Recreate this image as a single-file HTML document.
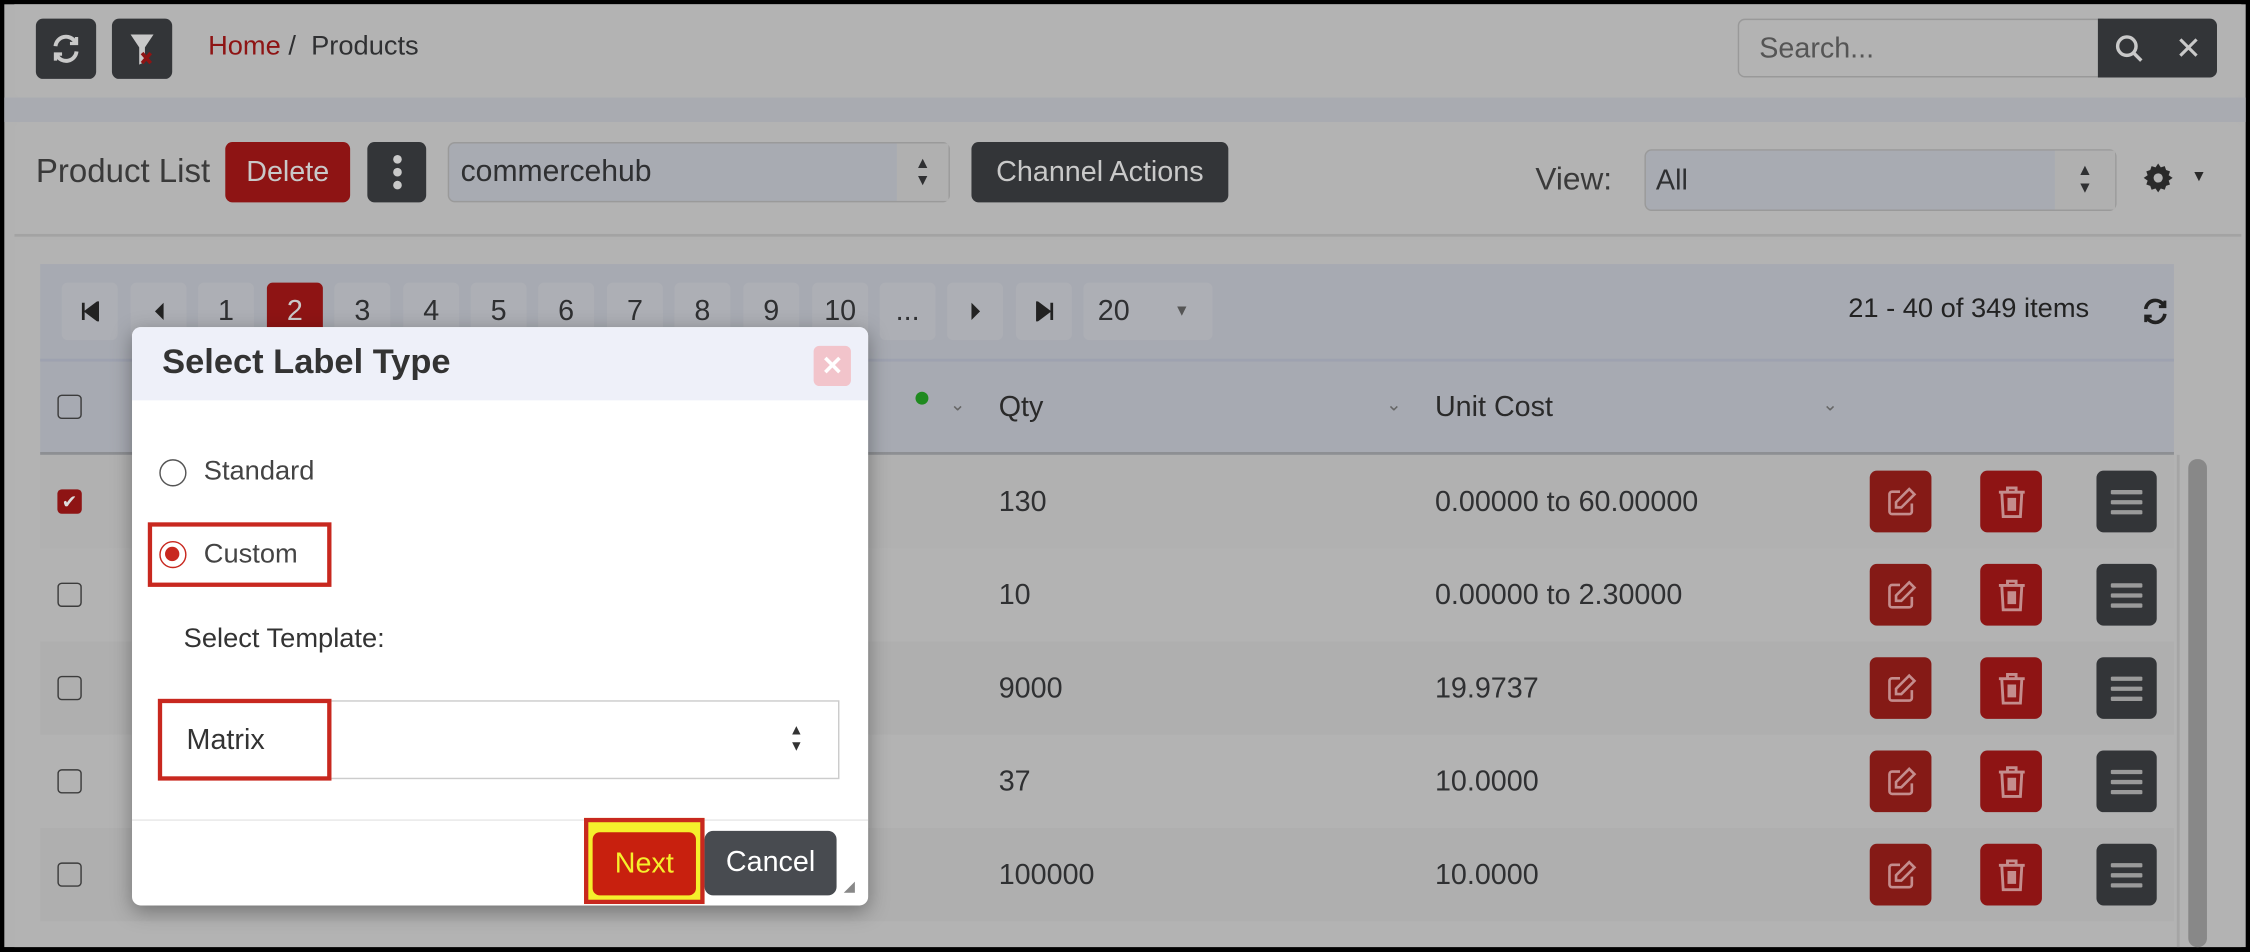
<!DOCTYPE html>
<html><head><meta charset="utf-8"><style>
*{box-sizing:border-box;margin:0;padding:0}
html,body{width:2250px;height:952px;overflow:hidden;background:#000}
#w{position:absolute;left:0;top:0;width:1568px;height:663px;transform:scale(1.43495);transform-origin:0 0;font-family:"Liberation Sans",sans-serif;color:#2f3032;background:#000}
.a{position:absolute}
.btn{position:absolute;border-radius:5px;display:flex;align-items:center;justify-content:center;color:#c9c9c9}
.dk{background:#333538}
.rd{background:#8e1414}
.pg{position:absolute;top:197px;width:39px;height:40px;background:#adafb5;border-radius:4px;font-size:20px;display:flex;align-items:center;justify-content:center;color:#2f3032}
.cb{position:absolute;left:40px;width:17px;height:17px;border:1.5px solid #3c3c3c;border-radius:3px}
.row{position:absolute;left:28px;width:1487px;height:65px}
.cell{position:absolute;font-size:20px}
</style></head><body><div id="w">
<div class="a" style="left:3px;top:3px;width:1562px;height:657px;background:#b2b2b2"></div>
<!-- top bar -->
<div class="a" style="left:10px;top:3px;width:1552px;height:65px;background:#b3b3b3;border-radius:0 0 5px 5px"></div>
<div class="a" style="left:3px;top:68px;width:1562px;height:17px;background:#a9abb1"></div>
<div class="btn dk" style="left:25px;top:13px;width:42px;height:42px"><svg width="22" height="22" viewBox="0 0 24 24" fill="none" stroke="#c9c9c9" stroke-width="3"><path d="M4 10a8 8 0 0 1 15-3M20 14a8 8 0 0 1-15 3"/><path d="M20 3v5h-5M4 21v-5h5" stroke-width="2.5"/></svg></div>
<div class="btn dk" style="left:78px;top:13px;width:42px;height:42px"><svg width="22" height="28" viewBox="0 0 22 28"><path d="M3 4h16l-6 9v10l-4 2V13z" fill="#c9c9c9"/><path d="M11 17l6 7M17 17l-6 7" stroke="#8e1414" stroke-width="2.5"/></svg></div>
<div class="a" style="left:145px;top:22px;font-size:19px"><span style="color:#8e1414">Home</span> /&nbsp; Products</div>
<div class="a" style="left:1211px;top:13px;width:255px;height:41px;border:1px solid #999;border-radius:5px 0 0 5px;background:#b3b3b3;font-size:20px;color:#555;padding:9px 14px">Search...</div>
<div class="btn dk" style="left:1462px;top:13px;width:83px;height:41px;border-radius:0 5px 5px 0;justify-content:space-around;font-size:22px"><svg width="22" height="22" viewBox="0 0 24 24" fill="none" stroke="#c9c9c9" stroke-width="2.6"><circle cx="10" cy="10" r="7"/><path d="M15 15l6 6"/></svg><span>✕</span></div>
<!-- second panel -->
<div class="a" style="left:10px;top:85px;width:1552px;height:80px;background:#b3b3b3;border-bottom:2px solid #a3a3a3;border-radius:5px 5px 0 0"></div>
<div class="a" style="left:25px;top:106px;font-size:23px;color:#3a3a3a">Product List</div>
<div class="btn rd" style="left:157px;top:99px;width:87px;height:42px;font-size:20px">Delete</div>
<div class="btn dk" style="left:256px;top:99px;width:41px;height:42px"><svg width="8" height="26"><circle cx="4" cy="4" r="3" fill="#c9c9c9"/><circle cx="4" cy="13" r="3" fill="#c9c9c9"/><circle cx="4" cy="22" r="3" fill="#c9c9c9"/></svg></div>
<div class="a" style="left:312px;top:99px;width:350px;height:42px;background:#a8abb2;border:1px solid #9a9a9a;border-radius:5px;font-size:21px;padding:8px 8px">commercehub<div class="a" style="right:0;top:0;width:36px;height:40px;background:#b0b0b0;font-size:11px;text-align:center;line-height:12px;padding-top:8px">▲<br>▼</div></div>
<div class="btn dk" style="left:677px;top:99px;width:179px;height:42px;font-size:20px">Channel Actions</div>
<div class="a" style="left:1070px;top:112px;font-size:22px;color:#3a3a3a">View:</div>
<div class="a" style="left:1146px;top:104px;width:329px;height:43px;background:#a8abb2;border:1px solid #9a9a9a;border-radius:5px;font-size:20px;padding:10px 7px">All<div class="a" style="right:0;top:0;width:42px;height:41px;background:#b0b0b0;font-size:11px;text-align:center;line-height:12px;padding-top:8px">▲<br>▼</div></div>
<div class="a" style="left:1493px;top:113px"><svg width="22" height="22" viewBox="0 0 24 24"><path d="M12 1l2 3 3-1 1 3 3 1-1 3 3 2-3 2 1 3-3 1-1 3-3-1-2 3-2-3-3 1-1-3-3-1 1-3-3-2 3-2-1-3 3-1 1-3 3 1z" fill="#2a2a2a"/><circle cx="12" cy="12" r="3.5" fill="#b3b3b3"/></svg></div>
<div class="a" style="left:1527px;top:117px;font-size:11px;color:#2a2a2a">▼</div>
<!-- table panel -->
<div class="a" style="left:10px;top:167px;width:1552px;height:493px;background:#b3b3b3"></div>
<div class="a" style="left:28px;top:184px;width:1487px;height:132px;background:#a7aab2"></div>
<div class="a" style="left:28px;top:250px;width:1487px;height:2px;background:#9ea2b0"></div>
<div class="a" style="left:28px;top:315px;width:1487px;height:2px;background:#8d8f93"></div>
<div class="pg" style="left:43px"><svg width="12" height="14"><path d="M1 1v12M11 1L3 7l8 6z" fill="#222" stroke="#222" stroke-width="2"/></svg></div>
<div class="pg" style="left:91px"><svg width="10" height="14"><path d="M8 1L2 7l6 6z" fill="#222"/></svg></div>
<div class="pg" style="left:138px">1</div>
<div class="pg" style="left:186px;background:#8e1414;color:#c9c9c9">2</div>
<div class="pg" style="left:233px">3</div><div class="pg" style="left:281px">4</div><div class="pg" style="left:328px">5</div><div class="pg" style="left:375px">6</div><div class="pg" style="left:423px">7</div><div class="pg" style="left:470px">8</div><div class="pg" style="left:518px">9</div><div class="pg" style="left:566px">10</div><div class="pg" style="left:613px">...</div>
<div class="pg" style="left:660px"><svg width="10" height="14"><path d="M2 1l6 6-6 6z" fill="#222"/></svg></div>
<div class="pg" style="left:708px"><svg width="12" height="14"><path d="M11 1v12M1 1l8 6-8 6z" fill="#222" stroke="#222" stroke-width="2"/></svg></div>
<div class="pg" style="left:755px;width:90px;justify-content:space-between;padding:0 16px 0 10px">20<span style="font-size:11px;color:#555">▼</span></div>
<div class="a" style="left:1288px;top:205px;font-size:19px;color:#222">21 - 40 of 349 items</div>
<div class="a" style="left:1492px;top:207px"><svg width="20" height="20" viewBox="0 0 24 24" fill="none" stroke="#222" stroke-width="3"><path d="M4 10a8 8 0 0 1 15-3M20 14a8 8 0 0 1-15 3"/><path d="M20 3v5h-5M4 21v-5h5" stroke-width="2.5"/></svg></div>
<div class="cb" style="top:275px"></div>
<div class="a" style="left:638px;top:273px;width:9px;height:9px;border-radius:50%;background:#1f8a1f"></div>
<div class="a" style="left:662px;top:274px;font-size:13px;color:#666">⌄</div>
<div class="cell" style="left:696px;top:273px;color:#2a2a2a">Qty</div>
<div class="a" style="left:966px;top:274px;font-size:13px;color:#666">⌄</div>
<div class="cell" style="left:1000px;top:273px;color:#2a2a2a">Unit Cost</div>
<div class="a" style="left:1270px;top:274px;font-size:13px;color:#666">⌄</div>
<!-- rows -->
<div class="row" style="top:317px;background:#b1b1b1"></div>
<div class="row" style="top:447px;background:#afafaf"></div>
<div class="row" style="top:577px;background:#afafaf"></div>
<div class="a" style="left:40px;top:341px;width:17px;height:17px;background:#8e1414;border-radius:3px;color:#ddd;font-size:13px;text-align:center;line-height:17px">✔</div>
<div class="cb" style="top:406px"></div><div class="cb" style="top:471px"></div><div class="cb" style="top:536px"></div><div class="cb" style="top:601px"></div>
<div class="cell" style="left:696px;top:339px">130</div><div class="cell" style="left:1000px;top:339px">0.00000 to 60.00000</div>
<div class="cell" style="left:696px;top:404px">10</div><div class="cell" style="left:1000px;top:404px">0.00000 to 2.30000</div>
<div class="cell" style="left:696px;top:469px">9000</div><div class="cell" style="left:1000px;top:469px">19.9737</div>
<div class="cell" style="left:696px;top:534px">37</div><div class="cell" style="left:1000px;top:534px">10.0000</div>
<div class="cell" style="left:696px;top:599px">100000</div><div class="cell" style="left:1000px;top:599px">10.0000</div>
<div id="acts"></div>
<div class="a" style="left:1517px;top:317px;width:2px;height:343px;background:#a5a5a5"></div>
<div class="a" style="left:1525px;top:320px;width:13px;height:340px;background:#888;border-radius:6px"></div>
<!-- modal -->
<div class="a" style="left:92px;top:228px;width:513px;height:403px;background:#fff;border-radius:6px;box-shadow:0 4px 14px rgba(0,0,0,.35);overflow:hidden">
 <div class="a" style="left:0;top:0;width:513px;height:51px;background:#eef0f9"></div>
 <div class="a" style="left:21px;top:11px;font-size:24px;font-weight:bold;color:#333">Select Label Type</div>
 <div class="a" style="left:475px;top:13px;width:26px;height:28px;background:#f2c4cb;border-radius:4px;color:#fff;font-weight:bold;text-align:center;font-size:18px;line-height:28px">✕</div>
 <div class="a" style="left:19px;top:92px;width:19px;height:19px;border:1.5px solid #555;border-radius:50%"></div>
 <div class="a" style="left:50px;top:90px;font-size:19px;color:#444">Standard</div>
 <div class="a" style="left:11px;top:136px;width:128px;height:45px;border:3px solid #c8281f"></div>
 <div class="a" style="left:19px;top:149px;width:19px;height:19px;border:1.5px solid #c8281f;border-radius:50%"><div class="a" style="left:3px;top:3px;width:10px;height:10px;background:#c8281f;border-radius:50%"></div></div>
 <div class="a" style="left:50px;top:148px;font-size:19px;color:#444">Custom</div>
 <div class="a" style="left:36px;top:207px;font-size:19px;color:#333">Select Template:</div>
 <div class="a" style="left:19px;top:260px;width:474px;height:55px;border:1px solid #ccc"></div>
 <div class="a" style="left:18px;top:259px;width:121px;height:57px;border:3px solid #c8281f"></div>
 <div class="a" style="left:38px;top:277px;font-size:20px;color:#333">Matrix</div>
 <div class="a" style="left:458px;top:276px;font-size:10px;line-height:11px;color:#333">▲<br>▼</div>
 <div class="a" style="left:0;top:343px;width:513px;height:1px;background:#e8e8e8"></div>
 <div class="a" style="left:315px;top:342px;width:84px;height:60px;background:#f5ef2c;border:3px solid #c8281f"></div>
 <div class="a" style="left:321px;top:352px;width:72px;height:44px;background:#c8200e;border-radius:5px;color:#f5ef2c;font-size:20px;text-align:center;line-height:44px">Next</div>
 <div class="a" style="left:399px;top:351px;width:92px;height:45px;background:#484b50;border-radius:6px;color:#fff;font-size:20px;text-align:center;line-height:45px">Cancel</div>
 <div class="a" style="left:496px;top:385px;font-size:10px;color:#888">◢</div>
</div>
<script>
var h='';[328,393,458,523,588].forEach(function(y){
h+='<div class="btn rd" style="left:1303px;top:'+y+'px;width:43px;height:43px;background:#851a16"><svg width="22" height="22" viewBox="0 0 24 24" fill="none" stroke="#c48d8d" stroke-width="2"><path d="M11 4H5a2 2 0 0 0-2 2v13a2 2 0 0 0 2 2h13a2 2 0 0 0 2-2v-6"/><path d="M18 2l4 4-10 10H8v-4z"/></svg></div>';
h+='<div class="btn rd" style="left:1380px;top:'+y+'px;width:43px;height:43px"><svg width="22" height="24" viewBox="0 0 22 24" fill="none" stroke="#c48d8d" stroke-width="2"><path d="M2 5h18M8 5V2h6v3M4 5l1 17h12l1-17M9 9v9M11 9v9M13 9v9"/></svg></div>';
h+='<div class="btn dk" style="left:1461px;top:'+y+'px;width:42px;height:43px"><svg width="22" height="18"><path d="M1 2h20M1 9h20M1 16h20" stroke="#9a9a9a" stroke-width="3" stroke-linecap="round"/></svg></div>';});
document.getElementById('acts').outerHTML=h;
</script>
</div></body></html>
